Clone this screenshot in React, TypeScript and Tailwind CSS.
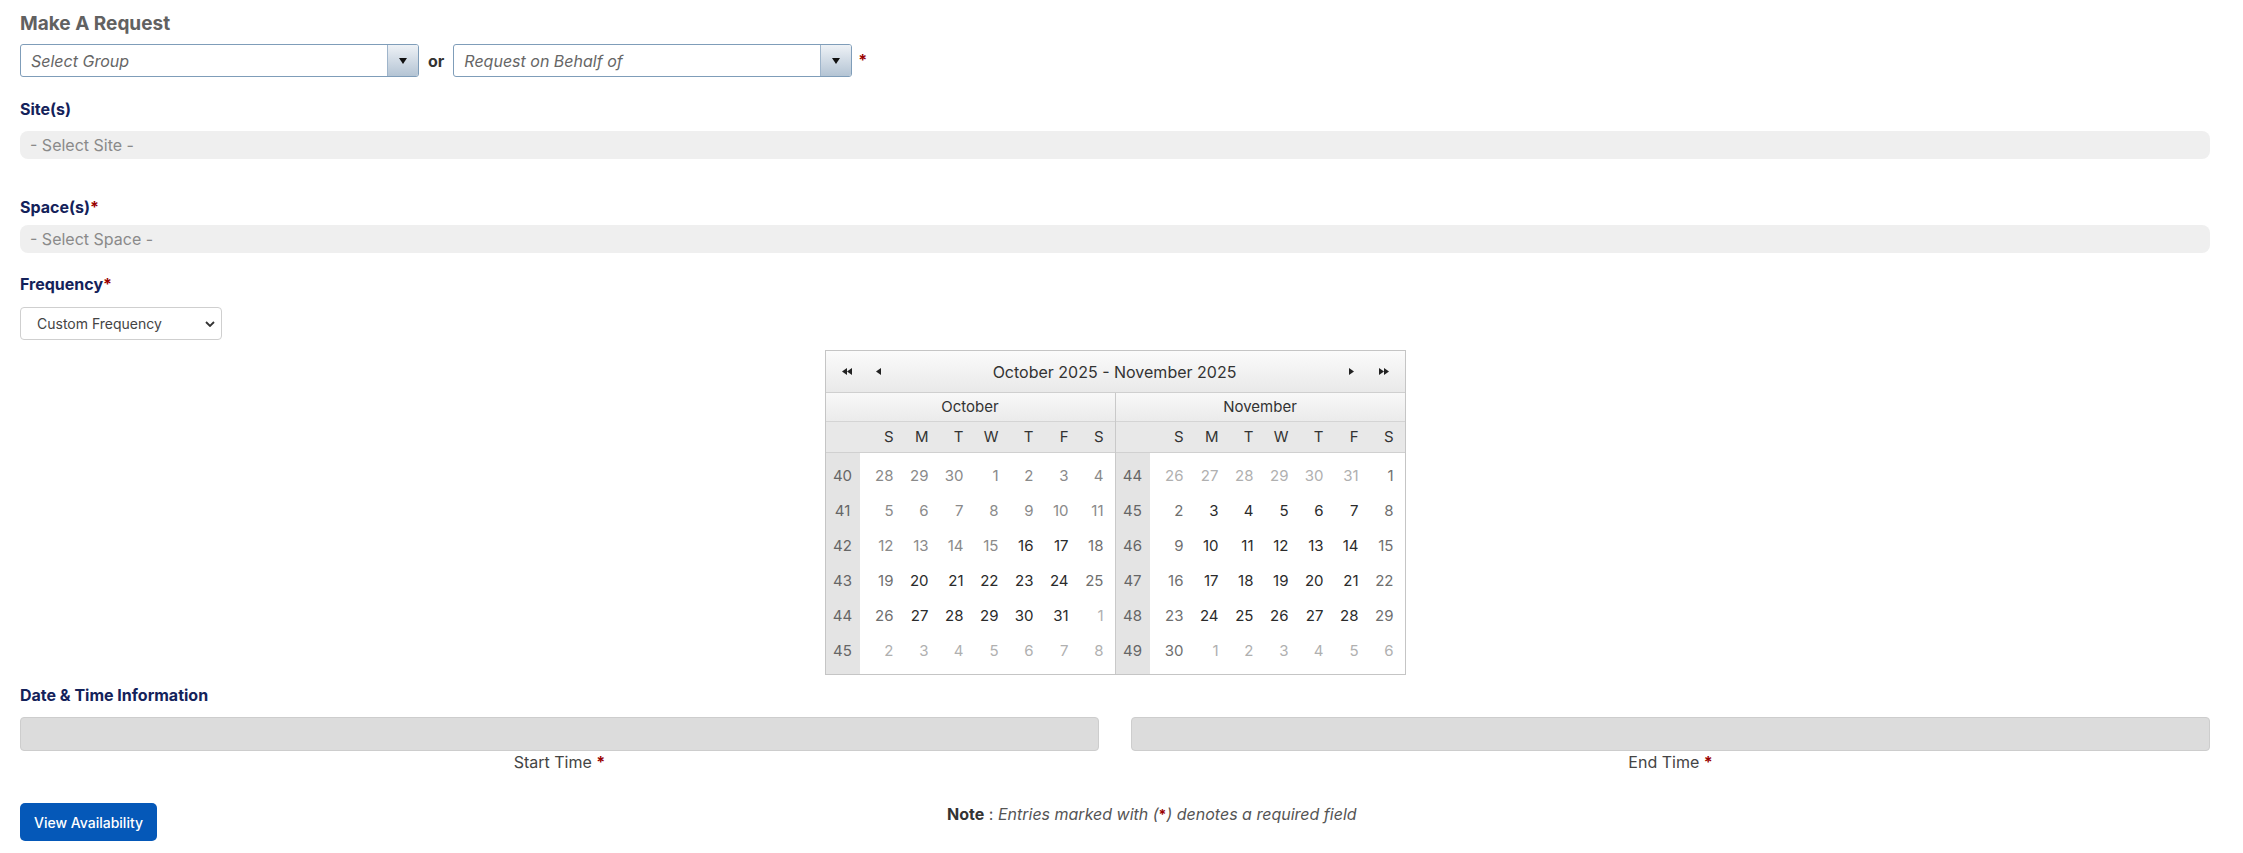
import clsx from "clsx";

type Tone = "avail" | "off" | "past" | "other";

const TODAY = new Date(2025, 9, 16);
const DOW = ["S", "M", "T", "W", "T", "F", "S"];
const MONTHS = ["January", "February", "March", "April", "May", "June", "July", "August", "September", "October", "November", "December"];

const toneClass: Record<Tone, string> = {
  avail: "text-[#2b2b2b]",
  off: "text-[#6f6f6f]",
  past: "text-[#8a8a8a]",
  other: "text-[#b0b0b0]",
};

function buildWeeks(year: number, month: number) {
  const first = new Date(year, month, 1);
  const weeks: { day: number; tone: Tone }[][] = [];
  for (let w = 0; w < 6; w++) {
    const row: { day: number; tone: Tone }[] = [];
    for (let d = 0; d < 7; d++) {
      const date = new Date(year, month, 1 - first.getDay() + w * 7 + d);
      let tone: Tone = "avail";
      if (date < TODAY) tone = "past";
      else if (date.getMonth() !== month) tone = "other";
      else if (d === 0 || d === 6) tone = "off";
      row.push({ day: date.getDate(), tone });
    }
    weeks.push(row);
  }
  return weeks;
}

function Star() {
  return <span className="font-bold text-[#990000]">*</span>;
}

function Triangle({ dir }: { dir: "left" | "right" }) {
  return (
    <svg width="5" height="7" viewBox="0 0 5 7">
      <path d={dir === "left" ? "M5 0 L0 3.5 L5 7 Z" : "M0 0 L5 3.5 L0 7 Z"} fill="#222" />
    </svg>
  );
}

function DoubleTriangle({ dir }: { dir: "left" | "right" }) {
  return (
    <span className="flex">
      <Triangle dir={dir} />
      <Triangle dir={dir} />
    </span>
  );
}

function MonthPanel({ year, month, firstWeek, divider }: { year: number; month: number; firstWeek: number; divider?: boolean }) {
  const weeks = buildWeeks(year, month);
  return (
    <div className={clsx("flex-1", divider && "border-l border-[#c9c9c9]")}>
      <div className="flex h-[29px] items-center justify-center border-b border-[#d4d4d4] bg-linear-to-b from-[#f8f8f8] to-[#ebebeb] text-[#333]">
        {MONTHS[month]}
      </div>
      <div className="flex h-[31px] items-center border-b border-[#d0d0d0] bg-[#e8e8e8] text-[#333]">
        <div className="w-[34px]" />
        <div className="flex pl-[5px]">
          {DOW.map((d, i) => (
            <div key={i} className="w-[35px] pr-[6px] text-right">
              {d}
            </div>
          ))}
        </div>
      </div>
      <div className="flex bg-white">
        <div className="w-[34px] bg-[#e4e4e4] pb-[5px] pt-[6px] text-[#666]">
          {weeks.map((_, i) => (
            <div key={i} className="flex h-[35px] items-center justify-center">
              {firstWeek + i}
            </div>
          ))}
        </div>
        <div className="pb-[5px] pl-[5px] pt-[6px]">
          {weeks.map((row, i) => (
            <div key={i} className="flex h-[35px] items-center">
              {row.map((c, j) => (
                <div key={j} className={clsx("w-[35px] pr-[6px] text-right", toneClass[c.tone])}>
                  {c.day}
                </div>
              ))}
            </div>
          ))}
        </div>
      </div>
    </div>
  );
}

function ComboBox({ placeholder }: { placeholder: string }) {
  return (
    <div className="flex h-[33px] w-[399px] overflow-hidden rounded-[3px] border border-[#7f9db9] bg-white">
      <div className="flex flex-1 items-center pl-[10px] text-[16px] italic text-[#666]">{placeholder}</div>
      <div className="flex w-[31px] items-center justify-center border-l border-[#9fb5cb] bg-linear-to-b from-[#eef2f6] to-[#b4c4d4]">
        <svg width="8" height="6" viewBox="0 0 8 6">
          <path d="M0 0 H8 L4 6 Z" fill="#111" />
        </svg>
      </div>
    </div>
  );
}

function FieldLabel({ children, required }: { children: React.ReactNode; required?: boolean }) {
  return (
    <div className="text-[16px] font-bold leading-[20px] text-[#14225a]">
      {children}
      {required && <Star />}
    </div>
  );
}

export default function App() {
  return (
    <div className="min-h-screen bg-white pl-[20px] pr-[33px] pt-[12px] font-['Inter',sans-serif] text-[#333]">
      <h1 className="text-[19px] font-bold leading-[23px] text-[#616161]">Make A Request</h1>

      <div className="mt-[9px] flex items-center">
        <ComboBox placeholder="Select Group" />
        <span className="mx-[9px] text-[16px] font-bold text-[#333]">or</span>
        <ComboBox placeholder="Request on Behalf of" />
        <span className="ml-[6px] self-start pt-[4px]">
          <Star />
        </span>
      </div>

      <div className="mt-[22px]">
        <FieldLabel>Site(s)</FieldLabel>
      </div>
      <div className="mt-[12px] flex h-[28px] items-center rounded-[8px] bg-[#efefef] pl-[10px] text-[16px] text-[#8a8a8a]">
        - Select Site -
      </div>

      <div className="mt-[38px]">
        <FieldLabel required>Space(s)</FieldLabel>
      </div>
      <div className="mt-[8px] flex h-[28px] items-center rounded-[8px] bg-[#efefef] pl-[10px] text-[16px] text-[#8a8a8a]">
        - Select Space -
      </div>

      <div className="mt-[21px]">
        <FieldLabel required>Frequency</FieldLabel>
      </div>
      <div className="mt-[13px] flex h-[33px] w-[202px] items-center justify-between rounded-[4px] border border-[#cfcfcf] bg-white pl-[16px] pr-[6px] text-[14px] text-[#444]">
        <span>Custom Frequency</span>
        <svg width="10" height="6" viewBox="0 0 10 6">
          <path d="M1 1 L5 5 L9 1" fill="none" stroke="#333" strokeWidth="1.8" />
        </svg>
      </div>

      <div className="mt-[10px] flex justify-center">
        <div className="w-[581px] border border-[#c5c5c5] text-[15px]">
          <div className="flex h-[42px] items-center border-b border-[#cfcfcf] bg-linear-to-b from-[#fbfbfb] to-[#e9e9e9] px-[16px] text-[16px] text-[#333]">
            <DoubleTriangle dir="left" />
            <span className="ml-[24px]">
              <Triangle dir="left" />
            </span>
            <span className="flex-1 text-center">October 2025 - November 2025</span>
            <span className="mr-[25px]">
              <Triangle dir="right" />
            </span>
            <DoubleTriangle dir="right" />
          </div>
          <div className="flex">
            <MonthPanel year={2025} month={9} firstWeek={40} />
            <MonthPanel year={2025} month={10} firstWeek={44} divider />
          </div>
        </div>
      </div>

      <div className="mt-[10px]">
        <FieldLabel>Date &amp; Time Information</FieldLabel>
      </div>
      <div className="mt-[12px] grid grid-cols-2 gap-[32px]">
        {["Start Time", "End Time"].map((label) => (
          <div key={label}>
            <div className="h-[34px] rounded-[4px] border border-[#cdcdcd] bg-[#dcdcdc]" />
            <div className="mt-[1px] text-center text-[16px] leading-[20px] text-[#444]">
              {label} <Star />
            </div>
          </div>
        ))}
      </div>

      <div className="mt-[31px] flex items-start pb-[10px]">
        <button className="h-[38px] rounded-[5px] bg-[#0558b8] px-[14px] text-[14px] font-medium text-white">
          View Availability
        </button>
        <p className="ml-[790px] mt-[1px] text-[16px] leading-[20px] text-[#555]">
          <span className="font-bold text-[#333]">Note</span> :{" "}
          <em>
            Entries marked with (<span className="not-italic text-[14px] font-bold text-[#990000]">*</span>) denotes a required field
          </em>
        </p>
      </div>
    </div>
  );
}
